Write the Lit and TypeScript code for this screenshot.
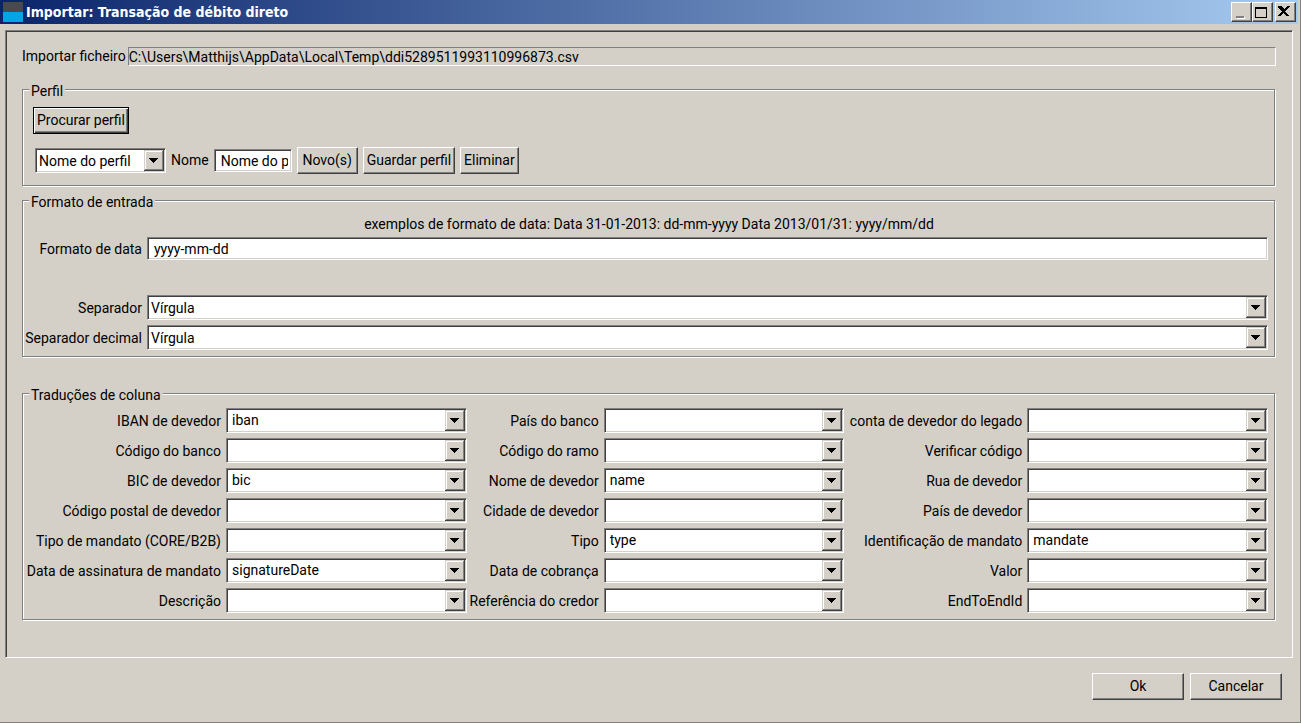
import { LitElement, html, css, nothing } from "lit";
import { customElement } from "lit/decorators.js";

const columns: [string, string][] = [
  ["IBAN de devedor", "iban"],
  ["País do banco", ""],
  ["conta de devedor do legado", ""],
  ["Código do banco", ""],
  ["Código do ramo", ""],
  ["Verificar código", ""],
  ["BIC de devedor", "bic"],
  ["Nome de devedor", "name"],
  ["Rua de devedor", ""],
  ["Código postal de devedor", ""],
  ["Cidade de devedor", ""],
  ["País de devedor", ""],
  ["Tipo de mandato (CORE/B2B)", ""],
  ["Tipo", "type"],
  ["Identificação de mandato", "mandate"],
  ["Data de assinatura de mandato", "signatureDate"],
  ["Data de cobrança", ""],
  ["Valor", ""],
  ["Descrição", ""],
  ["Referência do credor", ""],
  ["EndToEndId", ""],
];

const combo = (id: string, value: string, kind = "", labelledBy?: string) => html`
  <div class="combo">
    <select id=${id} class="list sunken ${kind}" aria-labelledby=${labelledBy ?? nothing}>
      <option selected>${value}</option>
    </select>
    <svg class="arrow" viewBox="0 0 20 21" shape-rendering="crispEdges" aria-hidden="true">
      <rect width="20" height="21" fill="#404040" />
      <rect width="19" height="20" fill="#d4d0c8" />
      <rect x="1" y="1" width="18" height="19" fill="#808080" />
      <rect x="1" y="1" width="17" height="18" fill="#fff" />
      <rect x="2" y="2" width="16" height="17" fill="#d4d0c8" />
      <path d="M5 8h9v1h-1v1h-1v1h-1v1h-1v1h-1v-1h-1v-1h-1v-1h-1v-1h-1z" fill="#000" />
    </svg>
  </div>
`;

@customElement("app-root")
class AppRoot extends LitElement {
  static styles = css`
    * {
      box-sizing: border-box;
    }
    button,
    input,
    select {
      font: inherit;
      color: inherit;
      margin: 0;
      border-radius: 0;
      outline: none;
    }
    :host {
      display: flex;
      flex-direction: column;
      box-sizing: border-box;
      min-height: 100vh;
      background: #d4d0c8;
      border: solid #808080;
      border-width: 0 1px 1px 0;
      color: #000;
      font: 14px/17px Roboto, "DejaVu Sans Condensed", sans-serif;
      white-space: nowrap;
    }
    .sunken {
      border: 1px solid;
      border-color: #808080 #fff #fff #808080;
      box-shadow: inset 1px 1px #404040, inset -1px -1px #d4d0c8;
      background: #fff;
    }
    .titlebar {
      display: flex;
      align-items: center;
      height: 24px;
      margin-right: 2px;
      padding: 0 2px 0 3px;
      background: linear-gradient(90deg, #0a246a, #a6caf0);
      color: #fff;
    }
    .logo {
      width: 20px;
      height: 20px;
    }
    .title {
      flex: 1;
      margin: 0 0 0 3px;
      font: bold 14px/20px "DejaVu Sans Condensed", Roboto, sans-serif;
    }
    .caption {
      display: block;
      width: 21px;
      height: 20px;
      padding: 0;
      border: 1px solid;
      border-color: #fff #404040 #404040 #fff;
      box-shadow: inset -1px -1px #808080;
      background: #d4d0c8;
    }
    .close {
      margin-left: 2px;
    }
    .caption svg {
      display: block;
    }
    .panel {
      flex: 1;
      margin: 6px 7px 0 5px;
      padding: 15px 16px 37px;
      border: 1px solid;
      border-color: #808080 #fff #fff #808080;
      box-shadow: inset 1px 1px #404040;
    }
    .file {
      display: flex;
      align-items: center;
      gap: 2px;
      padding-top: 1px;
    }
    .path {
      flex: 1;
      min-width: 0;
      height: 19px;
      padding: 0;
      border: 1px solid;
      border-color: #808080 #fff #fff #808080;
      background: transparent;
    }
    .group {
      min-width: 0;
      margin: 13px 1px 0 0;
      padding: 7px 6px 11px 10px;
      border: 1px solid #808080;
      box-shadow: inset 1px 1px #fff, 1px 1px #fff;
    }
    .group legend {
      margin-left: -4px;
      padding: 4px 2px 0;
      background: #d4d0c8;
    }
    .group.input {
      margin-top: 4px;
      padding: 5px 6px 6px 7px;
    }
    .group.mapping {
      margin-top: 26px;
      padding: 4px 6px 6px 7px;
    }
    .group.input legend,
    .group.mapping legend {
      margin-left: -1px;
    }
    .push {
      min-width: 61px;
      height: 27px;
      padding: 0 3px;
      border: 1px solid;
      border-color: #fff #404040 #404040 #fff;
      box-shadow: inset -1px -1px #808080;
      background: #d4d0c8;
    }
    .small {
      min-width: 58px;
    }
    .default {
      display: block;
      border-color: #000;
      box-shadow: inset 1px 1px #fff, inset -1px -1px #404040, inset -2px -2px #808080;
    }
    .combo {
      display: grid;
      min-width: 0;
    }
    .list,
    .arrow {
      grid-area: 1 / 1;
    }
    .list {
      appearance: none;
      width: 100%;
      min-width: 0;
      height: 25px;
      padding: 2px 24px 0 3px;
    }
    .editable {
      padding: 0 24px 0 5px;
    }
    .arrow {
      justify-self: end;
      margin: 2px;
      width: 20px;
      height: 21px;
      pointer-events: none;
    }
    .profile {
      display: flex;
      align-items: center;
      gap: 5px;
      margin-top: 13px;
      padding-left: 2px;
    }
    .profile .combo {
      width: 131px;
    }
    .field {
      width: 100%;
      min-width: 0;
      height: 23px;
      padding: 0 3px 0 6px;
    }
    .profile .field {
      width: 78px;
    }
    .hint {
      margin: 0 0 4px;
      text-align: center;
    }
    .form,
    .translations {
      display: grid;
      gap: 5px;
      align-items: center;
    }
    .form {
      grid-template-columns: 112px 1fr;
    }
    .translations {
      grid-template-columns: 191px 1fr 127px 1fr 173px 1fr;
    }
    .form label,
    .translations label {
      justify-self: end;
      padding-top: 2px;
    }
    .form .first,
    .form .field {
      margin-bottom: 30px;
    }
    .footer {
      display: flex;
      justify-content: flex-end;
      gap: 6px;
      padding: 15px 18px 22px;
    }
    .footer .push {
      width: 92px;
    }
  `;

  render() {
    return html`
      <header class="titlebar">
        <svg class="logo" viewBox="0 0 20 20" aria-hidden="true">
          <rect width="20" height="10" fill="#4a4a4a" />
          <rect y="10" width="20" height="10" fill="#00a5e3" />
        </svg>
        <h1 class="title">Importar: Transação de débito direto</h1>
        <button class="caption" aria-label="Minimizar">
          <svg width="19" height="18" shape-rendering="crispEdges">
            <rect x="5" y="14" width="8" height="2" fill="#fff" />
            <rect x="4" y="13" width="8" height="2" fill="#808080" />
          </svg>
        </button>
        <button class="caption" aria-label="Maximizar">
          <svg width="19" height="18" shape-rendering="crispEdges">
            <path d="M2 4h12v11h-12zM3 6v8h10v-8z" fill="#000" fill-rule="evenodd" />
          </svg>
        </button>
        <button class="caption close" aria-label="Fechar">
          <svg width="19" height="18" shape-rendering="crispEdges">
            <path
              d="M3 3h3v1h1v1h1v1h1v-1h1v-1h1v-1h3v1h-1v1h-1v1h-1v1h-1v1h-1v1h1v1h1v1h1v1h1v1h-3v-1h-1v-1h-1v-1h-1v1h-1v1h-1v1h-3v-1h1v-1h1v-1h1v-1h1v-1h-1v-1h-1v-1h-1v-1h-1v-1h-1z"
              fill="#000"
            />
          </svg>
        </button>
      </header>

      <main class="panel">
        <div class="file">
          <label for="file">Importar ficheiro</label>
          <input
            id="file"
            class="path"
            readonly
            .value=${"C:\\Users\\Matthijs\\AppData\\Local\\Temp\\ddi5289511993110996873.csv"}
          />
        </div>

        <fieldset class="group">
          <legend id="profile-legend">Perfil</legend>
          <button class="push default">Procurar perfil</button>
          <div class="profile">
            ${combo("profile", "Nome do perfil", "", "profile-legend")}
            <label for="name">Nome</label>
            <input id="name" class="field sunken" .value=${"Nome do perfil"} />
            <button class="push">Novo(s)</button>
            <button class="push">Guardar perfil</button>
            <button class="push small">Eliminar</button>
          </div>
        </fieldset>

        <fieldset class="group input">
          <legend>Formato de entrada</legend>
          <p class="hint">
            exemplos de formato de data: Data 31-01-2013: dd-mm-yyyy Data 2013/01/31: yyyy/mm/dd
          </p>
          <div class="form">
            <label class="first" for="date">Formato de data</label>
            <input id="date" class="field sunken" .value=${"yyyy-mm-dd"} />
            <label for="separator">Separador</label>
            ${combo("separator", "Vírgula")}
            <label for="decimal">Separador decimal</label>
            ${combo("decimal", "Vírgula")}
          </div>
        </fieldset>

        <fieldset class="group mapping">
          <legend>Traduções de coluna</legend>
          <div class="translations">
            ${columns.map(
              ([label, value], i) => html`
                <label for="column-${i}">${label}</label>
                ${combo(`column-${i}`, value, "editable")}
              `
            )}
          </div>
        </fieldset>
      </main>

      <footer class="footer">
        <button class="push">Ok</button>
        <button class="push">Cancelar</button>
      </footer>
    `;
  }
}
